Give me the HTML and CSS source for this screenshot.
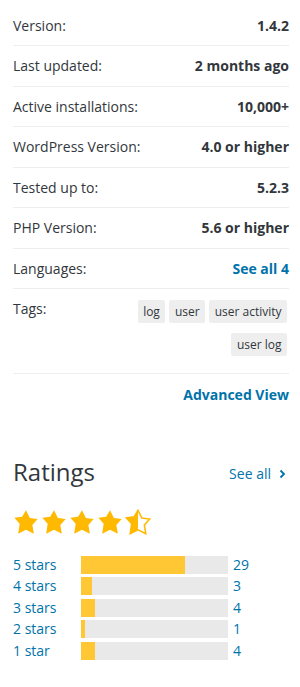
FILE: index.html
```html
<!DOCTYPE html>
<html>
<head>
<meta charset="utf-8">
<link rel="stylesheet" href="styles.css">
</head>
<body>
<div class="sidebar">
  <ul class="meta">
    <li class="row"><span class="label">Version:</span><strong class="value">1.4.2</strong></li>
    <li class="row"><span class="label">Last updated:</span><strong class="value">2 months ago</strong></li>
    <li class="row"><span class="label">Active installations:</span><strong class="value">10,000+</strong></li>
    <li class="row"><span class="label">WordPress Version:</span><strong class="value">4.0 or higher</strong></li>
    <li class="row"><span class="label">Tested up to:</span><strong class="value">5.2.3</strong></li>
    <li class="row"><span class="label">PHP Version:</span><strong class="value">5.6 or higher</strong></li>
    <li class="row"><span class="label">Languages:</span><a class="value link">See all 4</a></li>
    <li class="row tags-row"><span class="label">Tags:</span>
      <div class="tags">
        <a class="tag">log</a><a class="tag">user</a><a class="tag">user activity</a><a class="tag">user log</a>
      </div>
    </li>
  </ul>
  <div class="advanced"><a class="link">Advanced View</a></div>

  <div class="ratings">
    <div class="ratings-head">
      <h2 class="ratings-title">Ratings</h2>
      <a class="see-all">See all <svg class="chev" viewBox="0 0 10 10" width="10" height="10"><path d="M3.5 1.5L7 5 3.5 8.5" fill="none" stroke="#0073aa" stroke-width="1.8"/></svg></a>
    </div>
    <div class="stars">
      <svg class="star" viewBox="0 0 20 20"><path d="M10 1l3 6 6 .75-4.12 4.62L16 19l-6-3-6 3 1.13-7.63L1 6.75 7 6z" fill="#ffb900"/></svg>
      <svg class="star" viewBox="0 0 20 20"><path d="M10 1l3 6 6 .75-4.12 4.62L16 19l-6-3-6 3 1.13-7.63L1 6.75 7 6z" fill="#ffb900"/></svg>
      <svg class="star" viewBox="0 0 20 20"><path d="M10 1l3 6 6 .75-4.12 4.62L16 19l-6-3-6 3 1.13-7.63L1 6.75 7 6z" fill="#ffb900"/></svg>
      <svg class="star" viewBox="0 0 20 20"><path d="M10 1l3 6 6 .75-4.12 4.62L16 19l-6-3-6 3 1.13-7.63L1 6.75 7 6z" fill="#ffb900"/></svg>
      <svg class="star" viewBox="0 0 20 20"><defs><clipPath id="lh"><rect x="0" y="0" width="10" height="20"/></clipPath></defs><path d="M10 1l3 6 6 .75-4.12 4.62L16 19l-6-3-6 3 1.13-7.63L1 6.75 7 6z" fill="none" stroke="#ffb900" stroke-width="1.2" stroke-linejoin="miter"/><path d="M10 1l3 6 6 .75-4.12 4.62L16 19l-6-3-6 3 1.13-7.63L1 6.75 7 6z" fill="#ffb900" clip-path="url(#lh)"/></svg>
    </div>
    <ul class="bars">
      <li class="bar-row"><a class="bar-label">5 stars</a><span class="bar"><span class="fill" style="width:70.7%"></span></span><span class="count">29</span></li>
      <li class="bar-row"><a class="bar-label">4 stars</a><span class="bar"><span class="fill" style="width:7.3%"></span></span><span class="count">3</span></li>
      <li class="bar-row"><a class="bar-label">3 stars</a><span class="bar"><span class="fill" style="width:9.8%"></span></span><span class="count">4</span></li>
      <li class="bar-row"><a class="bar-label">2 stars</a><span class="bar"><span class="fill" style="width:2.4%"></span></span><span class="count">1</span></li>
      <li class="bar-row"><a class="bar-label">1 star</a><span class="bar"><span class="fill" style="width:9.8%"></span></span><span class="count">4</span></li>
    </ul>
  </div>
</div>
</body>
</html>
```

FILE: styles.css
```css
html, body {
  margin: 0;
  padding: 0;
  background: #fff;
}
body {
  font-family: "Open Sans", "Liberation Sans", sans-serif;
  font-size: 14px;
  color: #32373c;
}
.sidebar {
  padding: 5.5px 11px 0 13px;
}
.meta {
  list-style: none;
  margin: 0;
  padding: 0;
}
.row {
  display: flex;
  justify-content: space-between;
  align-items: flex-start;
  padding: 9.25px 0;
  line-height: 21px;
  border-bottom: 1px solid #eee;
}
.label {
  color: #32373c;
}
.value {
  font-weight: 700;
  color: #32373c;
}
.link {
  color: #0073aa;
  font-weight: 700;
  text-decoration: none;
}
.tags-row {
  padding-bottom: 17px;
}
.tags {
  display: flex;
  flex-wrap: wrap;
  justify-content: flex-end;
  gap: 10px 4px;
  max-width: 172px;
  margin-top: 1.75px;
  margin-right: 2px;
}
.tag {
  display: block;
  background: #eee;
  color: #32373c;
  font-size: 12px;
  line-height: 23px;
  height: 23px;
  padding: 0 5.5px;
  border-radius: 2px;
}
.advanced {
  display: flex;
  justify-content: flex-end;
  line-height: 21px;
  padding-top: 9.5px;
}
.ratings {
  padding-top: 52px;
}
.ratings-head {
  display: flex;
  justify-content: space-between;
  align-items: center;
  height: 30px;
}
.ratings-title {
  margin: 0;
  font-size: 24px;
  font-weight: 400;
  line-height: 30px;
  color: #32373c;
}
.see-all {
  color: #0073aa;
  font-size: 14px;
  display: flex;
  align-items: center;
  gap: 6px;
  margin-right: 2px;
  margin-top: 4px;
}
.chev {
  display: block;
}
.stars {
  display: flex;
  gap: 2px;
  margin-top: 22px;
  height: 26px;
}
.star {
  width: 26px;
  height: 26px;
  display: block;
}
.bars {
  list-style: none;
  margin: 0;
  padding: 0;
  margin-top: 21px;
}
.bar-row {
  display: flex;
  align-items: center;
  height: 18px;
  margin-bottom: 3.5px;
  line-height: 18px;
}
.bar-label {
  width: 68px;
  color: #0073aa;
  font-size: 14px;
}
.bar {
  display: block;
  width: 147px;
  height: 18px;
  background: #e9e9e9;
}
.fill {
  display: block;
  height: 100%;
  background: #ffc733;
}
.count {
  margin-left: 5px;
  color: #0073aa;
  font-size: 14px;
}
```
